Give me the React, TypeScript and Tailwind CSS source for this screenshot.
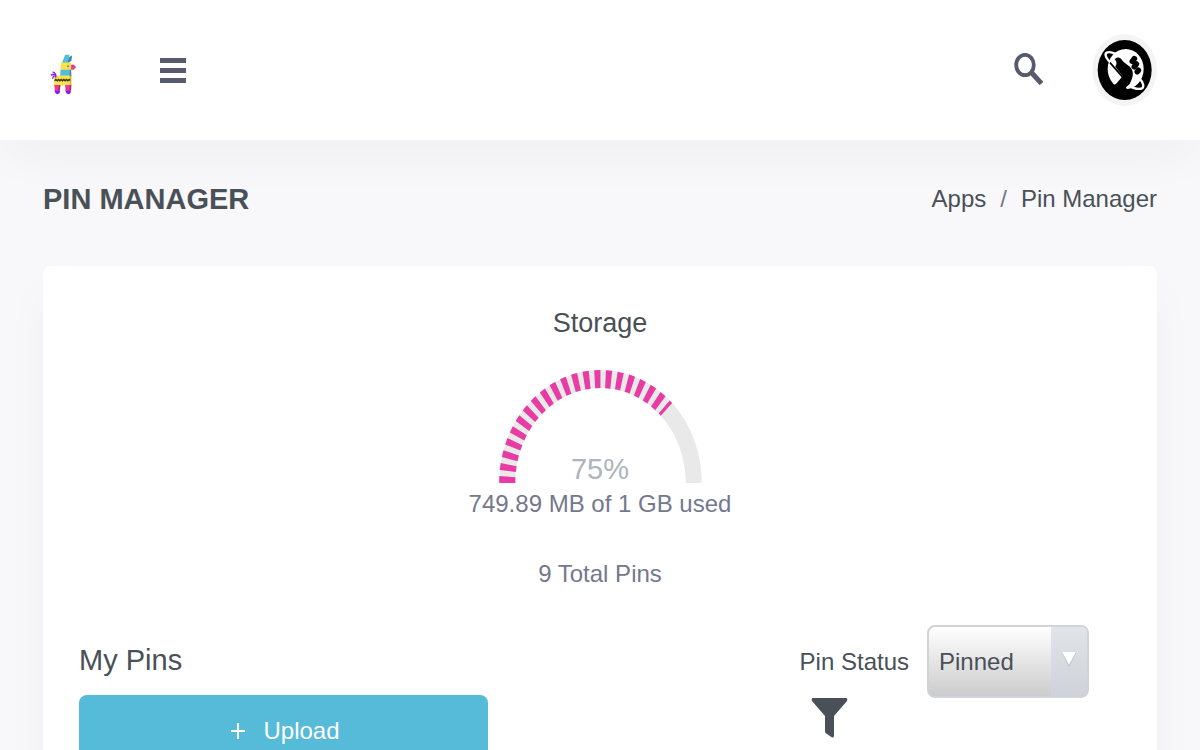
import React from "react";

function PinataLogo() {
  return (
    <svg viewBox="60 40 80 124" className="h-[41px] w-[27px]" aria-hidden="true">
      <path d="M105 42 L118 42 L114 68 L95 68 Z" fill="#55bbd9" />
      <path d="M117 50 L126 44 L124 60 L115 68 L112 68 Z" fill="#2f8ba5" />
      <path d="M93 66 h28 l4 6 v17 h-34 v-10 Z" fill="#fbe14a" />
      <path d="M123 74 q5 -4 10 0 l5 6 -6 6 q-5 4 -9 0 Z" fill="#e9379f" />
      <circle cx="114" cy="77" r="3" fill="#75808c" />
      <path d="M91 88 H120 V107 H90 Z" fill="#55bbd9" />
      <path d="M119 88 h4 l1 19 h-5 Z" fill="#2f8ba5" />
      <path d="M76 105 H118 V135 H71 V111 Z" fill="#fbe14a" />
      <path d="M118 106 h6 v29 h-6 Z" fill="#d7b91f" />
      <path d="M73 121 l4 -4 4 4 4 -4 4 4 4 -4 4 4 4 -4 4 4 4 -4 4 4 4 -4 3 3" fill="none" stroke="#33301c" strokeWidth="4" />
      <path d="M72 134 h16 v16 h-14 Z M105 134 h14 l-1 16 h-12 Z" fill="#e9379f" />
      <path d="M86 134 h5 l-2 16 h-5 Z M118 134 h6 l-1 16 h-6 Z" fill="#b6237a" />
      <path d="M72 150 h18 l-2 9 -6 3 -6 -3 Z M105 150 h18 l-2 9 -6 3 -6 -3 Z" fill="#8419e6" />
      <path d="M76 112 q4 -14 -9 -18 M75 104 q-7 -4 -13 0 M73 106 q-6 2 -6 9" fill="none" stroke="#8419e6" strokeWidth="4" />
    </svg>
  );
}

function AvatarImage() {
  return (
    <svg viewBox="0 0 210 216" className="h-[72px] w-[70px]" aria-hidden="true">
      <ellipse cx="104" cy="108" rx="97" ry="108" fill="#f4f4f4" />
      <ellipse cx="104" cy="108" rx="81" ry="90" fill="#000" />
      <ellipse cx="107" cy="105" rx="54" ry="60" fill="#fff" />
      <path d="M64 86 C50 78 42 60 50 56 C58 52 70 56 84 64" fill="none" stroke="#fff" strokeWidth="7" />
      <path d="M148 133 C160 145 163 158 156 163 C146 167 132 164 112 154" fill="none" stroke="#fff" strokeWidth="7" />
      <path d="M74 76 C80 68 91 68 96 78 C104 90 125 96 128 113 C130 130 124 138 119 150 L108 160 L112 170 L60 170 C64 160 72 154 80 148 L98 126 L76 98 C82 90 80 82 74 76 Z" fill="#000" />
      <path d="M60 86 L102 134" stroke="#000" strokeWidth="5" />
      <g stroke="#000" strokeWidth="17" strokeLinecap="round">
        <path d="M127 82 L133 74" />
        <path d="M133 98 L139 90" />
        <path d="M142 113 L145 109" />
      </g>
    </svg>
  );
}

function StorageGauge({ percent }: { percent: number }) {
  const angle = Math.PI * (1 - percent / 100);
  const endX = 104 * Math.cos(angle);
  const endY = -104 * Math.sin(angle);
  return (
    <div className="relative mt-[26px] flex justify-center">
      <svg viewBox="-102 -113 204 113" className="h-[113px] w-[204px]" aria-hidden="true">
        <g transform="translate(0.5 0) scale(0.897 1)" fill="none" strokeWidth="18">
          <path d="M-104 0 A104 104 0 0 1 104 0" stroke="#e9e9e9" />
          <path d={`M-104 0 A104 104 0 0 1 ${endX} ${endY}`} stroke="#e83ba4" strokeDasharray="6.4 5.66" />
        </g>
      </svg>
      <span className="absolute bottom-0 text-[29px] leading-7 text-[#adb5bd]">{percent}%</span>
    </div>
  );
}

export default function App() {
  return (
    <div className="min-h-screen overflow-x-hidden bg-[#f8f8fb] font-['Liberation_Sans',sans-serif] text-2xl leading-[42px] text-[#495057]">
      <header className="relative flex h-[140px] items-center justify-between bg-white pr-10 pl-[50px] shadow-[0_24px_48px_-6px_rgba(18,20,40,0.035)]">
        <div className="flex items-center gap-[83px]">
          <a href="#home" aria-label="Home" className="pt-2">
            <PinataLogo />
          </a>
          <button type="button" aria-label="Toggle menu" className="flex w-[26px] flex-col gap-[5px]">
            <span className="h-[5px] w-full bg-[#555b6d]" />
            <span className="h-[5px] w-full bg-[#555b6d]" />
            <span className="h-[5px] w-full bg-[#555b6d]" />
          </button>
        </div>
        <div className="flex items-center gap-[47px]">
          <button type="button" aria-label="Search" className="pb-[2px]">
            <svg viewBox="0 0 29 32" className="h-8 w-[29px]" fill="none" stroke="#555b6d">
              <ellipse cx="11" cy="12" rx="8.8" ry="10.2" strokeWidth="3.8" />
              <path d="M17 19 L27.500 30.500" strokeWidth="5" />
            </svg>
          </button>
          <button type="button" aria-label="Account">
            <AvatarImage />
          </button>
        </div>
      </header>

      <main className="px-[43px]">
        <div className="flex items-center justify-between pt-[38px] pb-[46px]">
          <h1 className="text-[29px] font-bold">PIN MANAGER</h1>
          <nav aria-label="Breadcrumb">
            <ol className="flex gap-[14px]">
              <li>
                <a href="#apps">Apps</a>
              </li>
              <li aria-hidden="true" className="text-[#74788d]">/</li>
              <li>
                <a href="#pin-manager">Pin Manager</a>
              </li>
            </ol>
          </nav>
        </div>

        <section className="rounded-lg bg-white px-9 pt-9 pb-9 shadow-[0_24px_48px_rgba(18,38,63,0.03)]">
          <div className="text-center text-[#74788d]">
            <h2 className="text-[27px] leading-[42px] text-[#495057]">Storage</h2>
            <StorageGauge percent={75} />
            <p>749.89 MB of 1 GB used</p>
            <p className="mt-7">9 Total Pins</p>
          </div>

          <div className="mt-[30px] flex items-start justify-between">
            <div className="w-[409px]">
              <h2 className="mt-[14px] text-[29px] leading-[42px]">My Pins</h2>
              <button type="button" className="mt-[14px] flex h-[72px] w-full items-center justify-center gap-[18px] rounded-lg bg-[#56bad9] pl-1 text-white">
                <svg viewBox="0 0 14 16" className="h-4 w-[14px]" stroke="currentColor" strokeWidth="2" aria-hidden="true">
                  <path d="M0 8 H14 M7 0 V16" />
                </svg>
                Upload
              </button>
            </div>
            <div className="pr-8">
              <div className="flex items-center gap-[18px]">
                <label htmlFor="pin-status">Pin Status</label>
                <div className="relative">
                  <select
                    id="pin-status"
                    defaultValue="Pinned"
                    className="block h-[73px] w-[162px] appearance-none rounded-lg border-2 border-[#ced4da] bg-linear-to-b from-white to-[#cccccc] pl-[10px]"
                  >
                    <option>Pinned</option>
                    <option>Unpinned</option>
                    <option>All</option>
                  </select>
                  <span className="pointer-events-none absolute inset-y-[2px] right-[2px] flex w-9 items-center justify-center rounded-r-md bg-linear-to-b from-[#e1e5e9] to-[#ced2d9]">
                    <svg viewBox="0 0 14 15" className="mb-1 h-[15px] w-[14px]" aria-hidden="true">
                      <path d="M0 1 H14 L7 15 Z" fill="#b4b9bf" />
                      <path d="M0 0 H14 L7 13 Z" fill="#fff" />
                    </svg>
                  </span>
                </div>
              </div>
              <button type="button" aria-label="Filter" className="ml-[11px] block">
                <svg viewBox="0 0 37 40" className="h-10 w-[37px]" fill="#495057" aria-hidden="true">
                  <path d="M1.5 0 H35.5 Q37 1 36 3 L23 18 V38 Q22.5 40 21 39.5 L14.5 35 Q14 34.5 14 33 V18 L1 3 Q0 1 1.5 0 Z" />
                </svg>
              </button>
            </div>
          </div>
        </section>
      </main>
    </div>
  );
}
